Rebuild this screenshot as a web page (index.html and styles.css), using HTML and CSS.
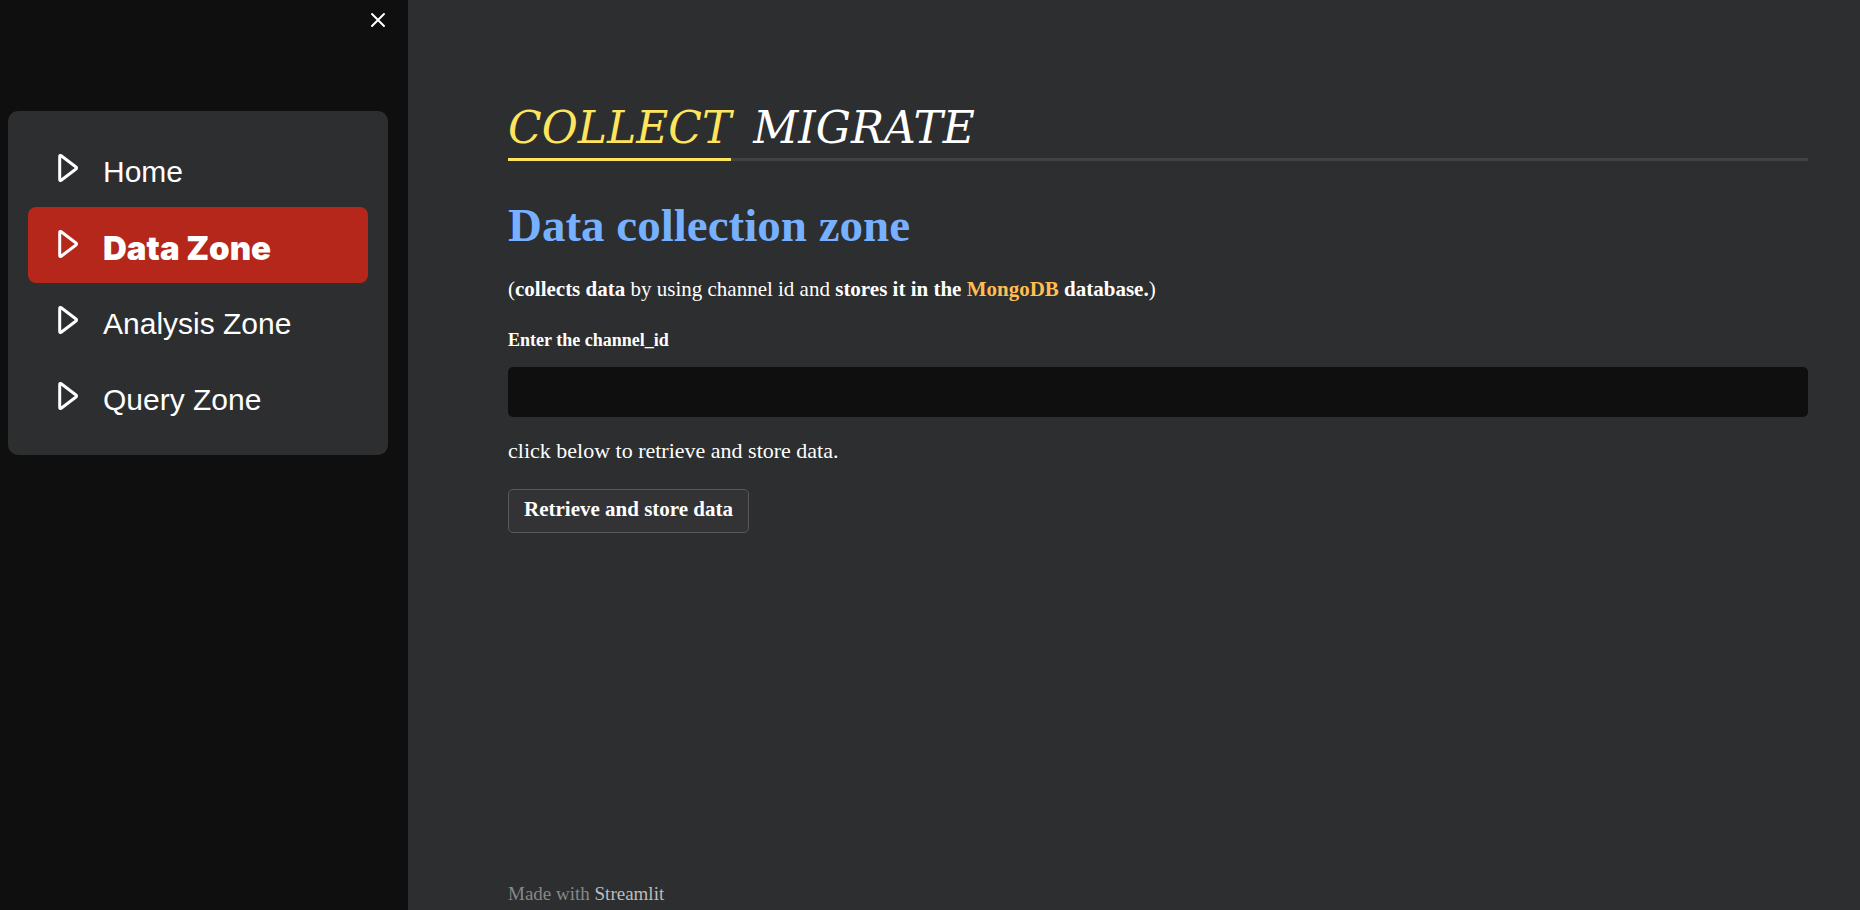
FILE: index.html
```html
<!DOCTYPE html>
<html lang="en">
<head>
<meta charset="utf-8">
<title>Data Zone</title>
<link rel="stylesheet" href="styles.css">
</head>
<body>
<div class="app">
  <aside class="sidebar">
    <div class="sidebar-top">
      <button class="close" type="button" aria-label="Close sidebar">
        <svg width="16" height="16" viewBox="0 0 16 16" fill="none" stroke="currentColor" stroke-width="2" stroke-linecap="round"><path d="M2 2l12 12M14 2L2 14"/></svg>
      </button>
    </div>
    <nav class="menu">
      <a class="item" href="#home"><svg class="tri" viewBox="0 0 20 28"><path d="M1.700 2.400v23.200c0 1 .8 1.200 1.500.6L18 15c.7-.6.7-1.400 0-2L3.200 1.800c-.7-.6-1.500-.4-1.500.6z"/></svg><span>Home</span></a>
      <a class="item active" href="#data" aria-current="page"><svg class="tri" viewBox="0 0 20 28"><path d="M1.700 2.400v23.200c0 1 .8 1.200 1.500.6L18 15c.7-.6.7-1.400 0-2L3.200 1.800c-.7-.6-1.500-.4-1.500.6z"/></svg><span>Data Zone</span></a>
      <a class="item" href="#analysis"><svg class="tri" viewBox="0 0 20 28"><path d="M1.700 2.400v23.200c0 1 .8 1.200 1.500.6L18 15c.7-.6.7-1.400 0-2L3.200 1.800c-.7-.6-1.500-.4-1.500.6z"/></svg><span>Analysis Zone</span></a>
      <a class="item" href="#query"><svg class="tri" viewBox="0 0 20 28"><path d="M1.700 2.400v23.200c0 1 .8 1.200 1.500.6L18 15c.7-.6.7-1.400 0-2L3.200 1.800c-.7-.6-1.500-.4-1.500.6z"/></svg><span>Query Zone</span></a>
    </nav>
  </aside>
  <main class="main">
    <div class="tabs" role="tablist">
      <button class="tab selected" type="button" role="tab" aria-selected="true">COLLECT</button>
      <button class="tab" type="button" role="tab" aria-selected="false">MIGRATE</button>
    </div>
    <h1 class="title">Data collection zone</h1>
    <p class="text">(<b>collects data</b> by using channel id and <b>stores it in the <span class="brand">MongoDB</span> database.</b>)</p>
    <label class="label" for="channel">Enter the channel_id</label>
    <input class="field" id="channel" type="text">
    <p class="hint">click below to retrieve and store data.</p>
    <button class="action" type="button">Retrieve and store data</button>
    <footer class="footer">Made with <a class="link" href="#streamlit">Streamlit</a></footer>
  </main>
</div>
</body>
</html>
```
FILE: styles.css
```css
* { box-sizing: border-box; }
body {
  margin: 0;
  background: #2c2e2f;
  color: #fff;
  font-family: "Liberation Serif", serif;
}
.app { display: flex; min-height: 100vh; }
.sidebar {
  flex: 0 0 408px;
  background: #0f0f0f;
  padding: 8px 20px 0 8px;
}
.sidebar-top { display: flex; justify-content: flex-end; height: 103px; }
.close {
  width: 24px;
  height: 24px;
  margin-right: -2px;
  padding: 4px;
  border: 0;
  background: none;
  color: #fff;
}
.close svg { display: block; }
.menu {
  display: flex;
  flex-direction: column;
  padding: 20px;
  border-radius: 10px;
  background: #2c2e2f;
}
.item {
  display: flex;
  align-items: center;
  min-height: 76px;
  gap: 25px;
  padding: 18px 30px;
  border-radius: 8px;
  color: #fff;
  font: 30px/34px "Liberation Sans", sans-serif;
  text-decoration: none;
}
.item span { padding-top: 6px; }
.tri {
  flex: none;
  width: 20px;
  height: 28px;
  margin-bottom: 2px;
  fill: none;
  stroke: #fff;
  stroke-width: 3;
  stroke-linejoin: round;
}
.active { background: #b5261b; font: 900 33px/34px Inter, sans-serif; }
.main {
  flex: 1;
  display: flex;
  flex-direction: column;
  padding: 96px 52px 0 100px;
}
.tabs { display: flex; gap: 22px; border-bottom: 3px solid #414244; }
.tab {
  margin-bottom: -3px;
  padding: 2px 0 0;
  border: 0;
  border-bottom: 3px solid transparent;
  background: none;
  color: #fff;
  font: italic 44px/60px "DejaVu Serif", serif;
}
.selected { color: #ffe45e; border-color: #ffe45e; }
.title { margin: 36px 0 0; color: #77b0ff; font-size: 47px; line-height: 56px; }
.text { margin: 24px 0; font-size: 21px; line-height: 24px; }
.hint { margin: 22px 0 26px; font-size: 22px; line-height: 24px; }
.brand { color: #ffbd52; }
.label { margin-bottom: 12px; font-size: 18px; font-weight: bold; line-height: 30px; }
.field {
  width: 100%;
  height: 50px;
  padding: 0 16px;
  border: 0;
  border-radius: 5px;
  background: #0f0f0f;
  color: #fff;
  font: 21px "Liberation Serif", serif;
}
.action {
  align-self: flex-start;
  height: 44px;
  padding: 0 15px 4px;
  border: 1px solid #58595b;
  border-radius: 5px;
  background: #333335;
  color: #fff;
  font: bold 21px/24px "Liberation Serif", serif;
}
.footer { margin-top: auto; padding-bottom: 4px; color: #87888a; font-size: 19px; line-height: 24px; }
.link { color: #bcbcbd; text-decoration: none; }
```
